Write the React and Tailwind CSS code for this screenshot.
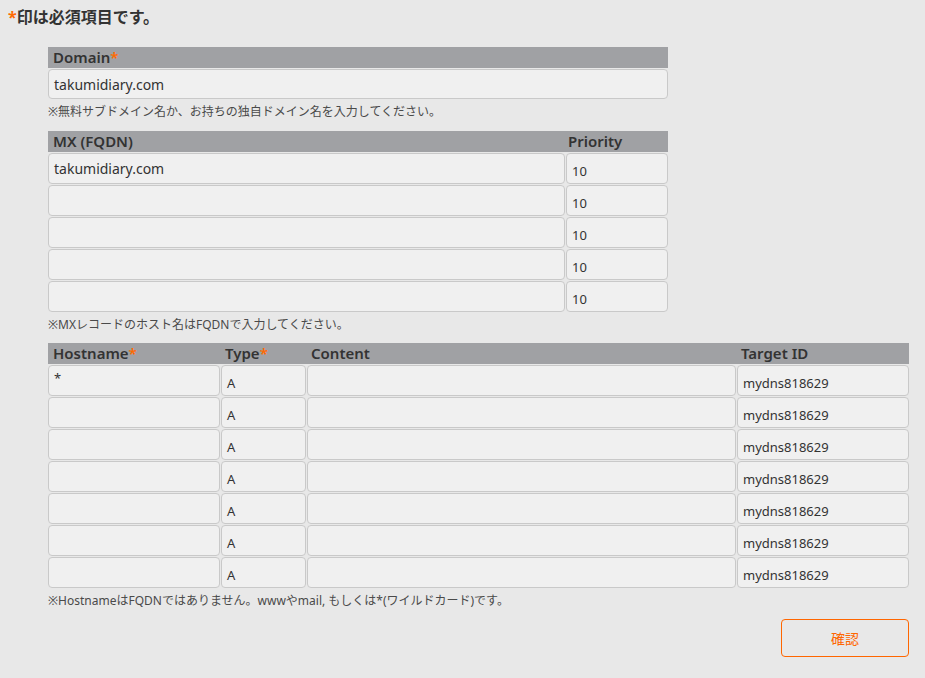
import React from "react";

const font = { fontFamily: '"Noto Sans", "Noto Sans CJK JP", sans-serif' };

function Req() {
  return <span className="text-[#ff6a00]">*</span>;
}

function Cell({ value, low, w }) {
  return (
    <div
      className={`${w} h-[31px] shrink-0 rounded-[4px] border border-[#c9c9c9] bg-[#f0f0f0] px-[5px] text-[#333] flex ${
        low ? "items-end pb-[2px] text-[13px]" : "items-center text-[14px]"
      }`}
    >
      {value}
    </div>
  );
}

function Header({ cols }) {
  return (
    <div className="flex h-[21px] bg-[#a0a1a4] text-[15px] font-semibold leading-[21px] text-[#333]">
      {cols.map((c, i) => (
        <div key={i} className={`${c.w} shrink-0 ${c.pl || "pl-[5px]"}`}>
          {c.label}
          {c.req && <Req />}
        </div>
      ))}
    </div>
  );
}

function Note({ children, h }) {
  return <div className={`${h} pt-[5px] text-[12px] leading-[16px] text-[#4a4a4a]`}>{children}</div>;
}

export default function App() {
  const mx = ["takumidiary.com", "", "", "", ""];
  const hosts = ["*", "", "", "", "", "", ""];

  return (
    <div style={font} className="min-h-[678px] w-full bg-[#e8e8e8] text-[#333]">
      <div className="pl-[8px] pt-[7px] text-[16px] font-bold leading-[20px]">
        <Req />印は必須項目です。
      </div>

      <div className="mt-[20px] pl-[48px]">
        <div className="w-[620px]">
          <Header cols={[{ label: "Domain", w: "w-[620px]", req: true }]} />
          <div className="mt-px">
            <div className="h-[30px] w-[620px] rounded-[4px] border border-[#c9c9c9] bg-[#f0f0f0] px-[5px] text-[14px] flex items-center">
              takumidiary.com
            </div>
          </div>
          <Note h="h-[32px]">※無料サブドメイン名か、お持ちの独自ドメイン名を入力してください。</Note>
        </div>

        <div className="w-[620px]">
          <Header
            cols={[
              { label: "MX (FQDN)", w: "w-[518px]" },
              { label: "Priority", w: "w-[102px]", pl: "pl-[2px]" },
            ]}
          />
          <div className="mt-px flex flex-col gap-px">
            {mx.map((v, i) => (
              <div key={i} className="flex gap-px">
                <Cell w="w-[517px]" value={v} />
                <Cell w="w-[102px]" value="10" low />
              </div>
            ))}
          </div>
          <Note h="h-[31px]">※MXレコードのホスト名はFQDNで入力してください。</Note>
        </div>

        <div className="w-[861px]">
          <Header
            cols={[
              { label: "Hostname", w: "w-[173px]", req: true },
              { label: "Type", w: "w-[86px]", req: true, pl: "pl-[4px]" },
              { label: "Content", w: "w-[430px]", pl: "pl-[4px]" },
              { label: "Target ID", w: "w-[172px]", pl: "pl-[4px]" },
            ]}
          />
          <div className="mt-px flex flex-col gap-px">
            {hosts.map((v, i) => (
              <div key={i} className="flex gap-px">
                <div className="w-[172px] h-[31px] shrink-0 rounded-[4px] border border-[#c9c9c9] bg-[#f0f0f0] px-[5px] pt-[4px] text-[13px] leading-[16px]">
                  {v}
                </div>
                <Cell w="w-[85px]" value="A" low />
                <Cell w="w-[429px]" value="" />
                <Cell w="w-[172px]" value="mydns818629" low />
              </div>
            ))}
          </div>
          <Note h="h-[31px]">※HostnameはFQDNではありません。wwwやmail, もしくは*(ワイルドカード)です。</Note>
          <div className="flex justify-end">
            <button className="h-[38px] w-[128px] rounded-[4px] border border-[#ff6600] bg-transparent text-[14px] text-[#ff6600]">
              確認
            </button>
          </div>
        </div>
      </div>
    </div>
  );
}
